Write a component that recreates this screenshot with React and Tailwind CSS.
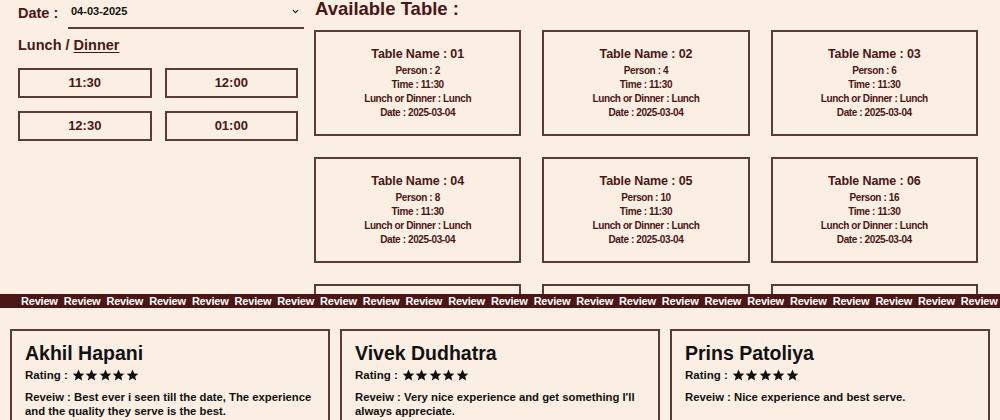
import React from "react";
import { ChevronDown } from "lucide-react";

const font = { fontFamily: '"Liberation Sans", Arial, sans-serif' };

const tables = [
  { name: "01", person: 2 },
  { name: "02", person: 4 },
  { name: "03", person: 6 },
  { name: "04", person: 8 },
  { name: "05", person: 10 },
  { name: "06", person: 16 },
  { name: "07", person: 20 },
  { name: "08", person: 22 },
  { name: "09", person: 24 },
];

const reviews = [
  {
    name: "Akhil Hapani",
    text: "Best ever i seen till the date, The experience and the quality they serve is the best.",
  },
  {
    name: "Vivek Dudhatra",
    text: "Very nice experience and get something I'll always appreciate.",
  },
  { name: "Prins Patoliya", text: "Nice experience and best serve." },
];

const Stars = () => (
  <span className="flex items-center gap-[0.5px]">
    {[0, 1, 2, 3, 4].map((i) => (
      <svg key={i} viewBox="0 0 24 24" className="w-[13px] h-[13px]" fill="#111">
        <path d="M12 1l3.2 7.1 7.6.7-5.8 5 1.8 7.5L12 17.3l-6.8 4 1.8-7.5-5.8-5 7.6-.7z" />
      </svg>
    ))}
  </span>
);

const TableCard = ({ t }) => (
  <div className="h-[106px] border-2 border-[#5a3b36] flex flex-col items-center justify-center text-[#4a1616] font-bold">
    <div className="text-[12.5px] leading-[16px] tracking-[-0.1px] mb-[2px]">Table Name : {t.name}</div>
    <div className="text-[10px] leading-[14px] tracking-[-0.4px]">Person : {t.person}</div>
    <div className="text-[10px] leading-[14px] tracking-[-0.4px]">Time : 11:30</div>
    <div className="text-[10px] leading-[14px] tracking-[-0.4px]">Lunch or Dinner : Lunch</div>
    <div className="text-[10px] leading-[14px] tracking-[-0.4px]">Date : 2025-03-04</div>
  </div>
);

export default function App() {
  return (
    <div className="w-[1000px] h-[420px] overflow-hidden bg-[#fbeee2]" style={font}>
      {/* Booking section */}
      <div className="h-[294px] overflow-hidden flex">
        <div className="w-[314px] shrink-0 pl-[18px] pr-[10px] text-[#4a1616] font-bold">
          <div className="flex items-end h-[29px]">
            <span className="text-[14.5px] leading-[20px] mb-[6px] w-[50px]">Date :</span>
            <div className="flex-1 flex items-center justify-between border-b-2 border-[#5a3b36] h-[29px] pl-[3px] pr-[4px] pb-[4px] text-[#111] text-[11px]">
              <span>04-03-2025</span>
              <ChevronDown size={9} strokeWidth={3} />
            </div>
          </div>
          <div className="mt-[6px] text-[14.5px] leading-[20px]">
            Lunch / <span className="underline underline-offset-2">Dinner</span>
          </div>
          <div className="mt-[13px] grid grid-cols-2 gap-x-[13px] gap-y-[13px] w-[280px]">
            {["11:30", "12:00", "12:30", "01:00"].map((time) => (
              <div
                key={time}
                className="h-[30px] border-2 border-[#5a3b36] flex items-center justify-center text-[13px]"
              >
                {time}
              </div>
            ))}
          </div>
        </div>
        <div className="flex-1 pr-[22px]">
          <h2 className="text-[18.5px] leading-[20px] font-bold text-[#4a1616] -mt-[1px] ml-[1px]">Available Table :</h2>
          <div className="mt-[11px] grid grid-cols-3 gap-x-[21px] gap-y-[21px]">
            {tables.map((t) => (
              <TableCard key={t.name} t={t} />
            ))}
          </div>
        </div>
      </div>

      {/* Review band */}
      <div className="h-[14px] bg-[#4a1616] flex items-center gap-[6px] pl-[21px] overflow-hidden whitespace-nowrap">
        {Array.from({ length: 24 }).map((_, i) => (
          <span key={i} className="text-white text-[11px] leading-[14px] font-bold tracking-[-0.2px]">
            Review
          </span>
        ))}
      </div>

      {/* Reviews */}
      <div className="mt-[21px] px-[10px] grid grid-cols-3 gap-[10px]">
        {reviews.map((r) => (
          <div key={r.name} className="h-[120px] border-2 border-[#5a3b36] px-[13px] pt-[10px] text-[#111] font-bold">
            <div className="text-[19.5px] leading-[24px]">{r.name}</div>
            <div className="mt-[2px] flex items-center gap-[4px] text-[11.5px] leading-[16px]">
              Rating : <Stars />
            </div>
            <div className="mt-[7px] text-[11.3px] leading-[14px]">Reveiw : {r.text}</div>
          </div>
        ))}
      </div>
    </div>
  );
}
